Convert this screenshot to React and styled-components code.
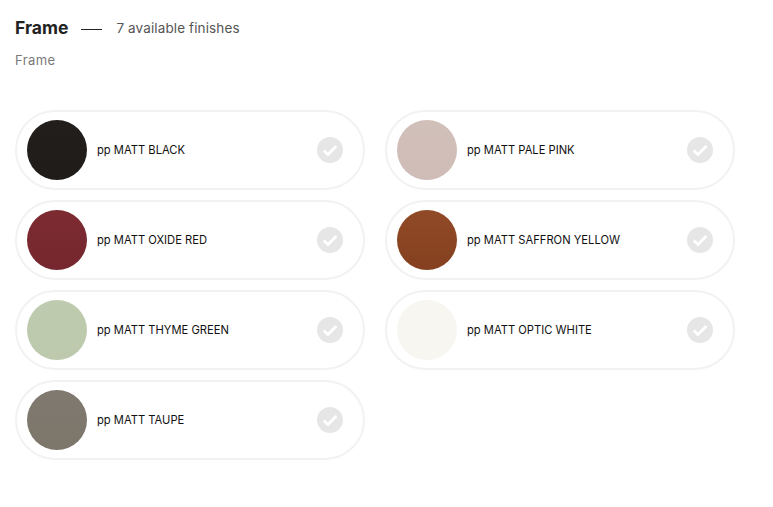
import React from "react";
import styled, { createGlobalStyle } from "styled-components";

const Global = createGlobalStyle`
  html, body { margin: 0; padding: 0; background: #fff; }
  body { font-family: Inter, "Liberation Sans", Arial, sans-serif; -webkit-font-smoothing: antialiased; }
`;

const Page = styled.div`
  width: 773px;
  height: 507px;
  box-sizing: border-box;
  padding: 17px 38px 0 15px;
  overflow: hidden;
`;

const Header = styled.header`
  display: flex;
  align-items: center;
  height: 22px;
`;

const Title = styled.h2`
  margin: 0;
  font-size: 17.5px;
  line-height: 22px;
  font-weight: 700;
  color: #222;
`;

const Dash = styled.span`
  width: 21px;
  height: 1px;
  background: #222;
  margin: 2px 14px 0 13px;
`;

const Count = styled.span`
  font-size: 13.5px;
  line-height: 22px;
  letter-spacing: 0.12px;
  color: #555;
`;

const Subtitle = styled.p`
  margin: 12px 0 0;
  font-size: 13px;
  line-height: 18px;
  letter-spacing: 0.4px;
  color: #7a7a7a;
`;

const Grid = styled.div`
  display: grid;
  grid-template-columns: 350px 350px;
  column-gap: 20px;
  row-gap: 10px;
  margin-top: 41px;
`;

const Card = styled.div`
  display: flex;
  align-items: center;
  box-sizing: border-box;
  height: 80px;
  padding: 0 20px 0 10px;
  border: 2px solid #f2f2f2;
  border-radius: 40px;
`;

const Swatch = styled.div`
  flex: none;
  width: 60px;
  height: 60px;
  border-radius: 50%;
  background: linear-gradient(${(p) => p.$from}, ${(p) => p.$to});
`;

const Name = styled.span`
  flex: 1;
  margin-left: 10px;
  font-size: 11.2px;
  line-height: 16px;
  color: #111;
`;

const Check = styled.svg`
  flex: none;
  width: 26px;
  height: 26px;
`;

const finishes = [
  ["pp MATT BLACK", "#211e1c", "#1f1c1a"],
  ["pp MATT PALE PINK", "#d1bfb9", "#cfbcb6"],
  ["pp MATT OXIDE RED", "#7c2b31", "#76262e"],
  ["pp MATT SAFFRON YELLOW", "#914a27", "#84401f"],
  ["pp MATT THYME GREEN", "#bfcbae", "#bdc9ad"],
  ["pp MATT OPTIC WHITE", "#f7f6f1", "#f7f6f1"],
  ["pp MATT TAUPE", "#80796f", "#7d766b"],
];

export default function App() {
  return (
    <Page>
      <Global />
      <Header>
        <Title>Frame</Title>
        <Dash />
        <Count>7 available finishes</Count>
      </Header>
      <Subtitle>Frame</Subtitle>
      <Grid>
        {finishes.map(([name, from, to]) => (
          <Card key={name}>
            <Swatch $from={from} $to={to} />
            <Name>{name}</Name>
            <Check viewBox="0 0 26 26" aria-hidden="true">
              <circle cx="13" cy="13" r="13" fill="#e6e6e6" />
              <path d="M6.8 13.4l4.2 4.2 8.4-8.6" fill="none" stroke="#fff" strokeWidth="2.8" />
            </Check>
          </Card>
        ))}
      </Grid>
    </Page>
  );
}
